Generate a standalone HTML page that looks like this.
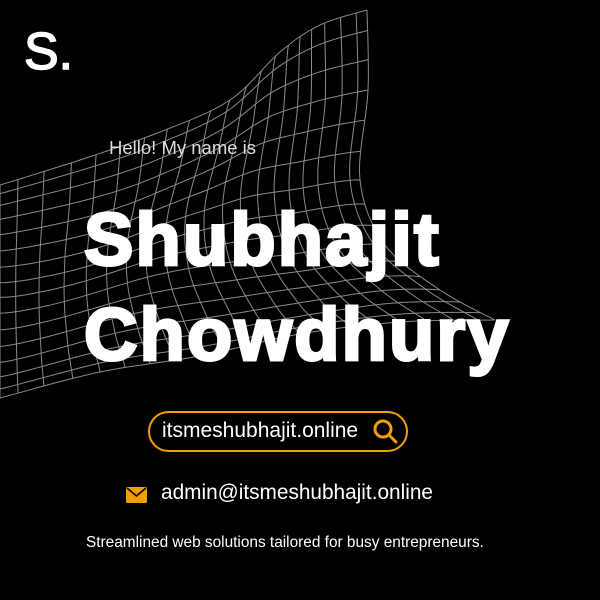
<!DOCTYPE html>
<html><head><meta charset="utf-8"><style>
html,body{margin:0;padding:0;background:#000;}
#c{position:relative;width:600px;height:600px;overflow:hidden;background:#000;font-family:"Liberation Sans",sans-serif;color:#fff;}
.t{position:absolute;white-space:nowrap;line-height:1;}
.big{font-size:74px;font-weight:bold;letter-spacing:2.2px;-webkit-text-stroke:3px #fff;}
</style></head><body><div id="c">
<svg id="m" width="600" height="600" style="position:absolute;left:0;top:0" fill="none" stroke="#8a8a8a" stroke-width="1"></svg>
<div class="t" style="left:24px;top:26px;font-size:52px;-webkit-text-stroke:1.5px #fff;">S.</div>
<div class="t" style="left:109px;top:139px;font-size:18.5px;color:#ddd;">Hello! My name is</div>
<div class="t big" style="left:84px;top:203px;">Shubhajit</div>
<div class="t big" style="left:84px;top:298px;">Chowdhury</div>
<div style="position:absolute;left:148px;top:411px;width:256px;height:37px;border:2.5px solid #f59e0b;border-radius:22px;"></div>
<div class="t" style="left:162px;top:420px;font-size:21px;">itsmeshubhajit.online</div>
<svg style="position:absolute;left:372px;top:418px" width="28" height="28" viewBox="0 0 28 28" fill="none" stroke="#f59e0b" stroke-width="3" stroke-linecap="round"><circle cx="11" cy="11" r="8"/><path d="M17 17 L24 24"/></svg>
<svg style="position:absolute;left:126px;top:487px" width="21" height="16" viewBox="0 0 21 16"><rect x="0" y="0" width="21" height="16" rx="1.5" fill="#f59e0b"/><path d="M1 1 L10.5 9 L20 1" stroke="#000" stroke-width="1.6" fill="none"/></svg>
<div class="t" style="left:161px;top:483px;font-size:20.8px;">admin@itsmeshubhajit.online</div>
<div class="t" style="left:86px;top:535px;font-size:15.4px;">Streamlined web solutions tailored for busy entrepreneurs.</div>
</div>
<script>
function pl(pts,t){var n=pts.length-1,f=t*n,i=Math.min(Math.floor(f),n-1),r=f-i;
var a=pts[Math.max(i-1,0)],b=pts[i],c=pts[i+1],d=pts[Math.min(i+2,n)];
function cr(p0,p1,p2,p3){return 0.5*((2*p1)+(-p0+p2)*r+(2*p0-5*p1+4*p2-p3)*r*r+(-p0+3*p1-3*p2+p3)*r*r*r);}
return[cr(a[0],b[0],c[0],d[0]),cr(a[1],b[1],c[1],d[1])];}
var T=[[0,185],[80,160],[160,132],[230,100],[280,52],[320,25],[367,10]];
var B=[[0,398],[100,372],[200,356],[300,334],[400,322],[495,320]];
var L=[[0,185],[0,290],[0,398]];
var R=[[367,10],[368,90],[360,180],[385,245],[440,290],[495,320]];
var c00=T[0],c10=T[T.length-1],c01=B[0],c11=B[B.length-1];
function P(u,v){var t=pl(T,u),b=pl(B,u),l=pl(L,v),r=pl(R,v),o=[];
for(var k=0;k<2;k++)o[k]=(1-v)*t[k]+v*b[k]+(1-u)*l[k]+u*r[k]-((1-u)*(1-v)*c00[k]+u*(1-v)*c10[k]+(1-u)*v*c01[k]+u*v*c11[k]);
var w=Math.sin(u*6.28*1.3+v*2.5)*Math.sin(v*3.14)*Math.sin(u*3.14)*10;
return[o[0]+w*0.5,o[1]+w];}
var s="",NU=20,NV=15,K=50;
for(var i=0;i<=NU;i++){var d="";for(var k=0;k<=K;k++){var p=P(i/NU,k/K);d+=(k?"L":"M")+p[0].toFixed(1)+" "+p[1].toFixed(1);}s+='<path d="'+d+'"/>';}
for(var j=0;j<=NV;j++){var d="";for(var k=0;k<=K;k++){var p=P(k/K,j/NV);d+=(k?"L":"M")+p[0].toFixed(1)+" "+p[1].toFixed(1);}s+='<path d="'+d+'"/>';}
document.getElementById("m").innerHTML=s;
</script>
</body></html>
